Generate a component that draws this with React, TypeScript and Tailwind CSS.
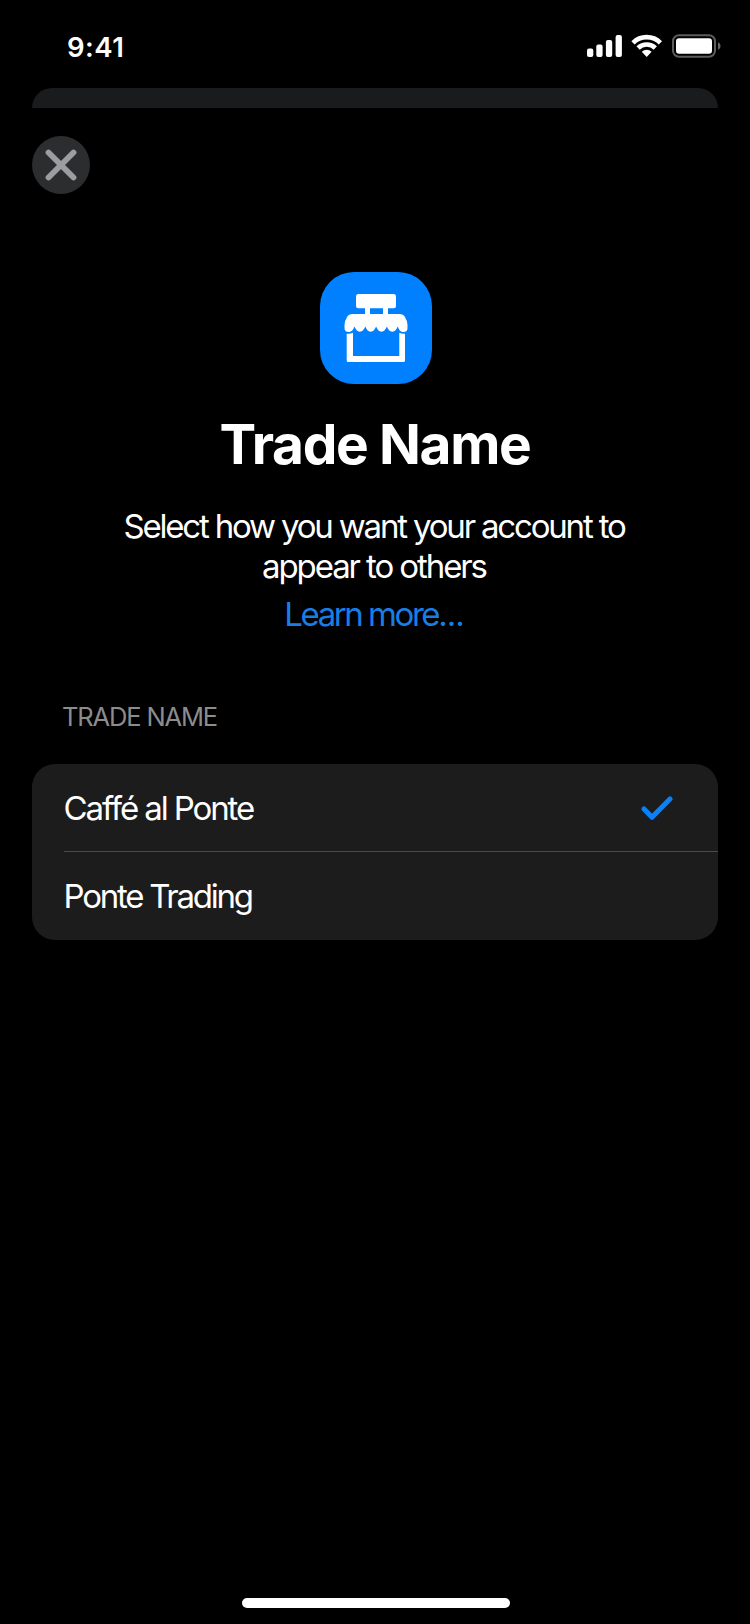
import React from "react";

const names = [
  { label: "Caffé al Ponte", tracking: "tracking-[-2.1px]", selected: true },
  { label: "Ponte Trading", tracking: "tracking-[-2.25px]", selected: false },
];

const StatusBar = () => {
  return (
    <div className="flex h-[88px] items-start justify-between pl-[67px] pr-[29px]">
      <span className="mt-[31px] text-[27.5px] font-semibold leading-8 tracking-[0.5px]">9:41</span>
      <svg className="mt-[34px]" width="134" height="24" viewBox="587 34 134 24" fill="#fff">
        <rect x="587" y="48.5" width="6.3" height="8.5" rx="2" />
        <rect x="596.3" y="44.5" width="6.3" height="12.5" rx="2" />
        <rect x="605.9" y="40" width="6.3" height="17" rx="2" />
        <rect x="615.6" y="35" width="6.3" height="22" rx="2" />
        <g fill="none" stroke="#fff" strokeWidth="4.6">
          <path d="M633 42.8a19.4 19.4 0 0 1 27.4 0" />
          <path d="M638.1 48a12.2 12.2 0 0 1 17.2 0" />
        </g>
        <path d="M641.8 51.7a7 7 0 0 1 9.8 0L646.7 57z" />
        <rect x="673" y="35.2" width="42" height="21.6" rx="6" fill="none" stroke="#5c5c5c" strokeWidth="2" />
        <rect x="676" y="38.2" width="36" height="15.6" rx="3" />
        <path d="M718 42.3c3.4 1.6 3.4 5.9 0 7.5z" fill="#666" />
      </svg>
    </div>
  );
};

const StoreIcon = () => {
  return (
    <div className="ml-0.5 flex h-28 w-28 items-center justify-center rounded-[34px] bg-[#0080ff]">
      <svg width="112" height="112" viewBox="0 0 112 112" fill="#fff">
        <rect x="36" y="22" width="40" height="14.3" rx="2.5" />
        <rect x="45" y="34" width="5" height="10" />
        <rect x="63" y="34" width="5" height="10" />
        {/* awning with six scallops */}
        <path d="M32 42H80Q83.500 42 84.700 44.500Q87.500 49 87.500 53V56Q87.500 60 83.500 60C80 60 79 57.500 77.700 54.500C76.500 57.500 75 59.700 72.300 59.700S68 57.500 66.900 54.500C65.500 57.500 64.200 59.700 61.500 59.700S57.400 57.500 56.100 54.500C54.800 57.500 53.400 59.700 50.700 59.700S46.600 57.500 45.300 54.500C44 57.500 42.600 59.700 39.900 59.700S35.800 57.500 34.500 54.500C33.200 57.500 32 60 28.500 60Q24.500 60 24.500 56V53Q24.500 49 27.300 44.500Q28.500 42 32 42Z" />
        <path d="M26.700 61.700Q30.500 62 33 60.700V84H79.300V60.700Q81.800 62 85 61.700V88.500Q85 90 83.500 90H28.200Q26.700 90 26.700 88.500Z" />
      </svg>
    </div>
  );
};

const App = () => {
  return (
    <div className="flex h-[1624px] w-[750px] flex-col overflow-hidden bg-black font-['Inter',sans-serif] text-white">
      <StatusBar />
      <div className="mx-8 h-5 rounded-t-[22px] bg-[#1a1b1c]" />

      <button className="ml-8 mt-7 flex h-[58px] w-[58px] items-center justify-center rounded-full bg-[#2c2d2f]">
        <svg width="32" height="32" viewBox="0 0 32 32" stroke="#9b9da1" strokeWidth="5.8" strokeLinecap="round">
          <path d="M3.5 3.5l25 25M28.5 3.5l-25 25" />
        </svg>
      </button>

      <div className="mt-[78px] flex flex-col items-center text-center">
        <StoreIcon />
        <h1 className="mt-7 text-[55px] font-bold leading-16 tracking-[-1.35px]">Trade Name</h1>
        <p className="mr-0.5 mt-[30px] w-[560px] text-[33px] leading-10 tracking-[-2.18px]">
          Select how you want your account to
          <br />
          <span className="tracking-[-2.1px]">appear to others</span>
        </p>
        <a className="mr-0.5 mt-2 text-[33px] leading-10 tracking-[-2.45px] text-[#187ee6]">
          Learn more<span className="tracking-[-1px]">...</span>
        </a>
      </div>

      <h2 className="ml-[62px] mt-[66.5px] text-[25.5px] leading-8 tracking-[-1.15px] text-[#8c8c8c]">TRADE NAME</h2>
      <div className="mx-8 mt-[31px] rounded-[23px] bg-[#1c1c1c] pl-8">
        {names.map((n, i) => (
          <div
            key={n.label}
            className={
              "flex h-[88px] items-center justify-between pr-[45px] " +
              (i === 0 ? "border-b border-[#4a4a4a] pt-px" : "")
            }
          >
            <span className={"-ml-[0.5px] text-[33px] leading-10 " + n.tracking}>{n.label}</span>
            {n.selected && (
              <svg
                width="32"
                height="26"
                viewBox="0 0 32 26"
                fill="none"
                stroke="#0a80fa"
                strokeWidth="5"
                strokeLinecap="round"
                strokeLinejoin="round"
              >
                <path d="M3 14l8 8.3L29 4" />
              </svg>
            )}
          </div>
        ))}
      </div>

      <div className="mb-4 ml-[242px] mt-auto h-2.5 w-[268px] rounded-full bg-white" />
    </div>
  );
};

export default App;
